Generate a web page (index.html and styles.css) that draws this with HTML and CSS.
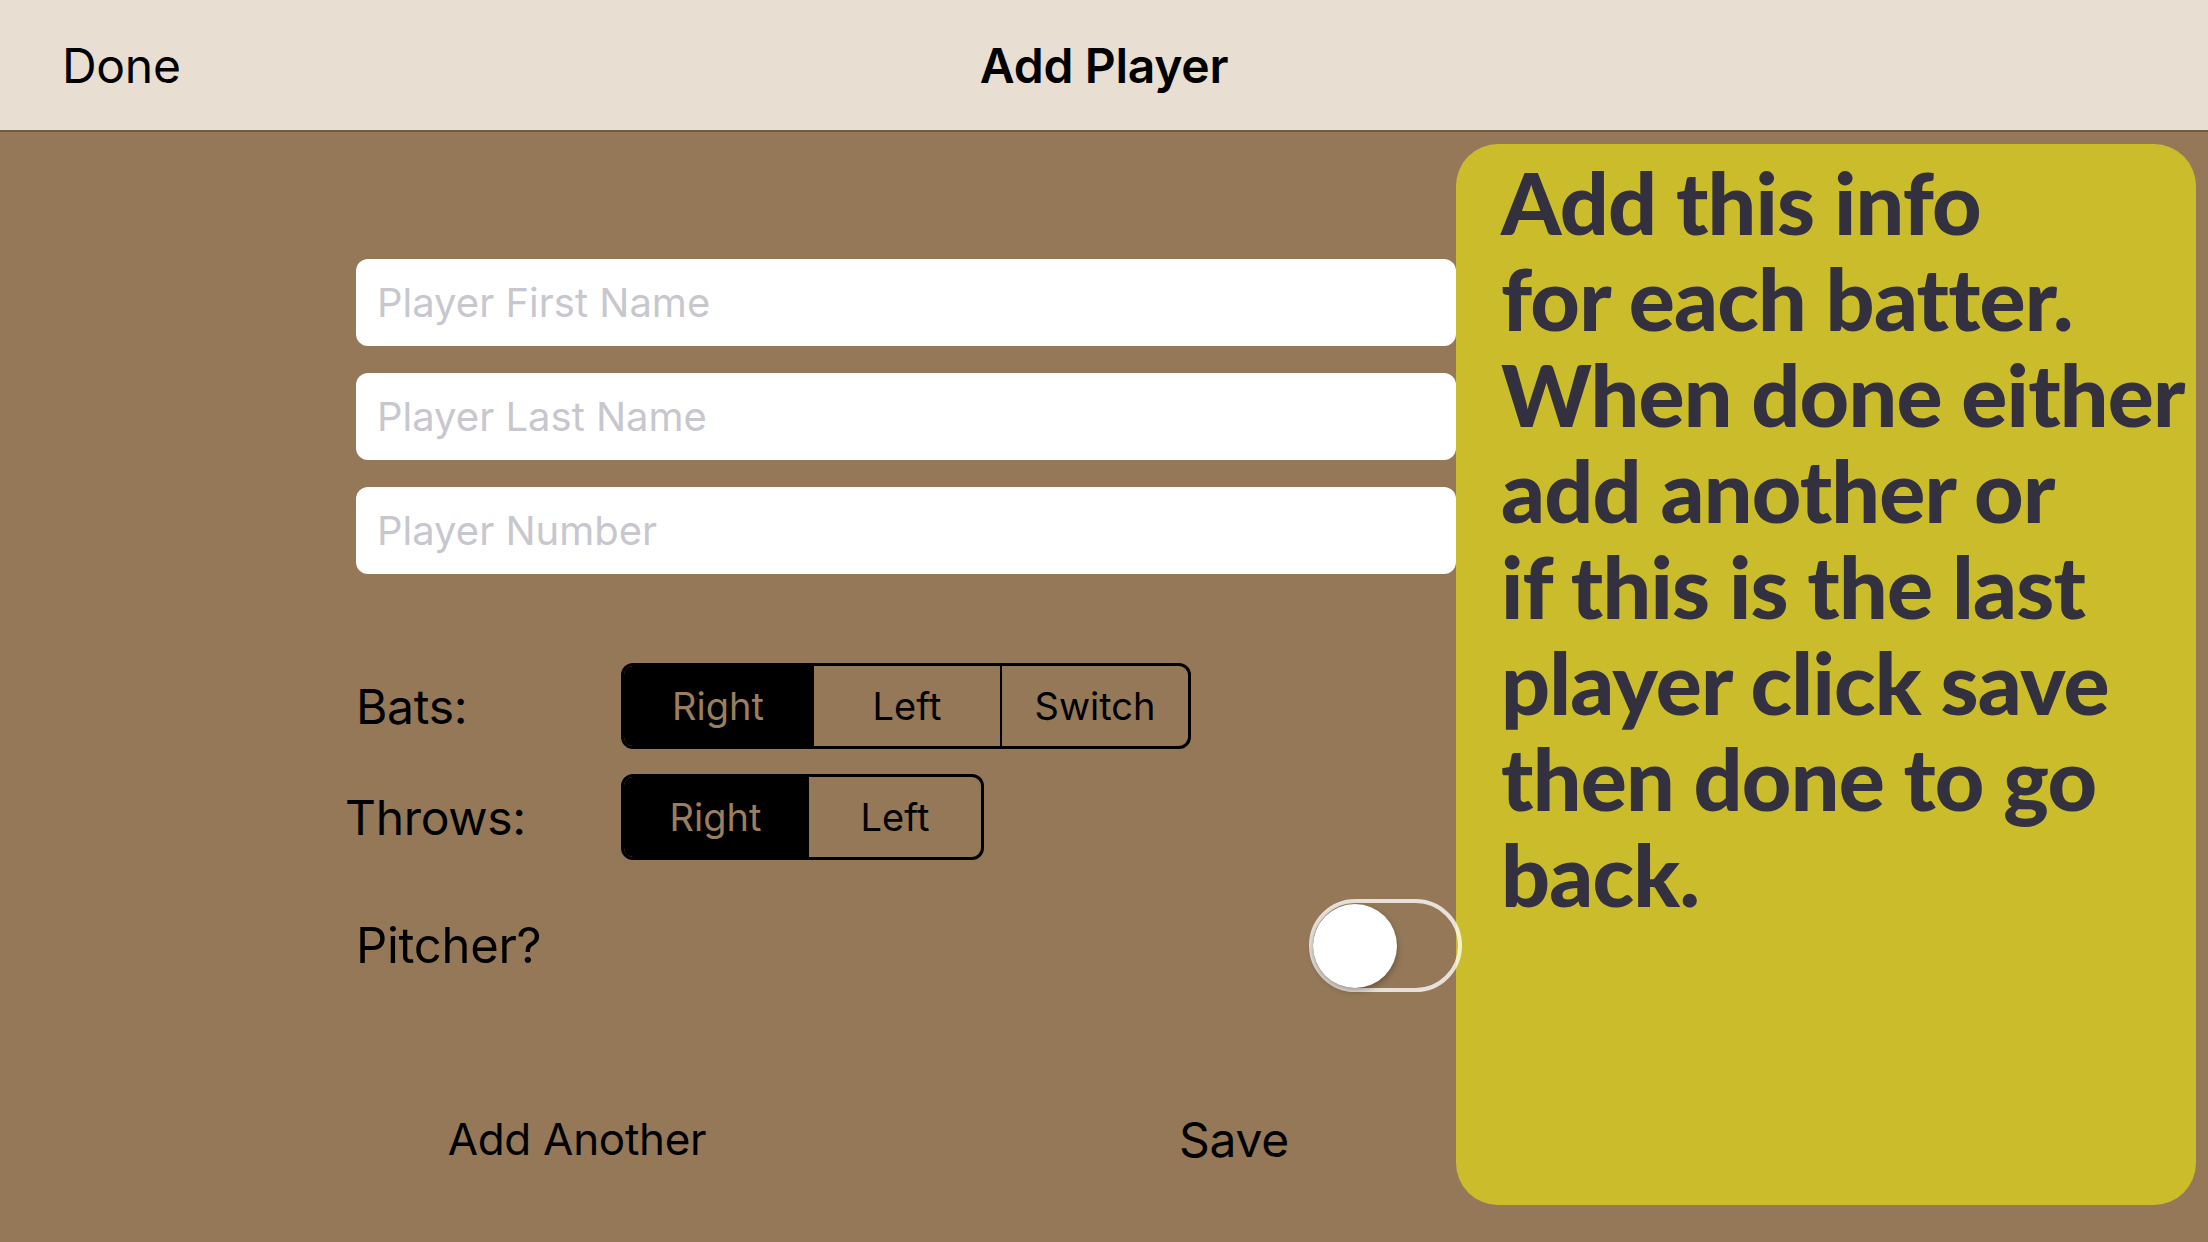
FILE: index.html
```html
<!DOCTYPE html>
<html lang="en">
<head>
<meta charset="utf-8">
<title>Add Player</title>
<link rel="stylesheet" href="styles.css">
</head>
<body>
<div class="screen">
  <header class="navbar">
    <span class="nav-done">Done</span>
    <span class="nav-title">Add Player</span>
    <span class="nav-spacer"></span>
  </header>
  <main class="content">
    <section class="form">
      <div class="fields">
        <input class="field" type="text" placeholder="Player First Name">
        <input class="field" type="text" placeholder="Player Last Name">
        <input class="field" type="text" placeholder="Player Number">
      </div>
      <div class="row row-bats">
        <span class="label">Bats:</span>
        <div class="seg seg-bats">
          <span class="seg-item is-on">Right</span>
          <span class="seg-item">Left</span>
          <span class="seg-item">Switch</span>
        </div>
      </div>
      <div class="row row-throws">
        <span class="label label-throws">Throws:</span>
        <div class="seg seg-throws">
          <span class="seg-item is-on">Right</span>
          <span class="seg-item">Left</span>
        </div>
      </div>
      <div class="row row-pitcher">
        <span class="label label-pitcher">Pitcher?</span>
        <div class="switch"><span class="knob"></span></div>
      </div>
      <div class="actions">
        <span class="action action-add">Add Another</span>
        <span class="action action-save">Save</span>
      </div>
    </section>
    <aside class="coach">
      <p class="coach-text">Add this info<br>for each batter.<br>When done either<br>add another or<br>if this is the last<br>player click save<br>then done to go<br>back.</p>
    </aside>
  </main>
</div>
</body>
</html>
```

FILE: styles.css
```css
* { box-sizing: border-box; }
html, body { margin: 0; padding: 0; }
body {
  width: 2208px;
  height: 1242px;
  overflow: hidden;
  background: #947858;
  font-family: Inter, "Liberation Sans", sans-serif;
  color: #000;
}
.screen { width: 2208px; height: 1242px; display: flex; flex-direction: column; }

.navbar {
  height: 132px;
  flex: none;
  background: #E8DED2;
  border-bottom: 2px solid #6E5A43;
  display: flex;
  align-items: center;
  justify-content: space-between;
  padding: 0 62px;
}
.nav-done { font-size: 48px; font-weight: 400; width: 300px; letter-spacing: -0.3px; }
.nav-title { font-size: 48px; font-weight: 600; letter-spacing: -0.3px; }
.nav-spacer { width: 300px; }

.content { position: relative; flex: 1; }

.form {
  width: 1106px;
  margin-left: 356px;
  padding-top: 127px;
  display: flex;
  flex-direction: column;
}
.fields { display: flex; flex-direction: column; gap: 27px; width: 1100px; }
.field {
  height: 87px;
  width: 100%;
  border: none;
  border-radius: 12px;
  background: #fff;
  padding: 0 21px;
  font-family: Inter, "Liberation Sans", sans-serif;
  font-size: 40px;
  color: #000;
  outline: none;
}
.field::placeholder { color: #C7C7CD; }

.row { display: flex; align-items: center; }
.row-bats { margin-top: 89px; height: 86px; }
.row-throws { margin-top: 25px; height: 86px; }
.row-pitcher { margin-top: 39px; height: 93px; justify-content: space-between; }

.label { font-size: 48px; width: 265px; flex: none; letter-spacing: -0.3px; }
.label-throws { margin-left: -11px; width: 276px; }
.label-pitcher { font-size: 49px; }

.seg {
  display: flex;
  height: 86px;
  border: 3px solid #000;
  border-radius: 12px;
  overflow: hidden;
}
.seg-item {
  display: flex;
  align-items: center;
  justify-content: center;
  font-size: 38px;
  color: #000;
  border-left: 2px solid #000;
}
.seg-item:first-child { border-left: none; }
.seg-item.is-on { background: #000; color: #9A7E5E; }
.seg-bats .seg-item { width: 188px; }
.seg-throws .seg-item:first-child { width: 183px; }
.seg-throws .seg-item:last-child { width: 174px; }

.switch {
  position: relative;
  z-index: 2;
  width: 153px;
  height: 93px;
  border: 4px solid rgba(255, 255, 255, 0.78);
  border-radius: 47px;
  display: flex;
  align-items: center;
}
.knob {
  width: 84px;
  height: 84px;
  border-radius: 50%;
  background: #fff;
  box-shadow: 0 3px 6px rgba(0,0,0,0.3), 0 0 1px rgba(0,0,0,0.2);
}

.actions {
  margin-top: 107px;
  margin-left: 71px;
  display: flex;
  gap: 357px;
  height: 80px;
  align-items: center;
}
.action { width: 300px; text-align: center; }
.action-add { font-size: 44px; letter-spacing: -0.3px; }
.action-save { font-size: 48px; letter-spacing: -0.3px; }

.coach {
  position: absolute;
  z-index: 1;
  left: 1456px;
  top: 12px;
  width: 740px;
  height: 1061px;
  background: #CABC2A;
  border-radius: 42px;
  padding: 10px 0 0 45px;
}
.coach-text {
  margin: 0;
  font-family: Lato, "Open Sans", sans-serif;
  font-weight: 900;
  font-size: 86px;
  line-height: 96px;
  letter-spacing: -0.8px;
  color: #33313F;
  white-space: nowrap;
}
```
